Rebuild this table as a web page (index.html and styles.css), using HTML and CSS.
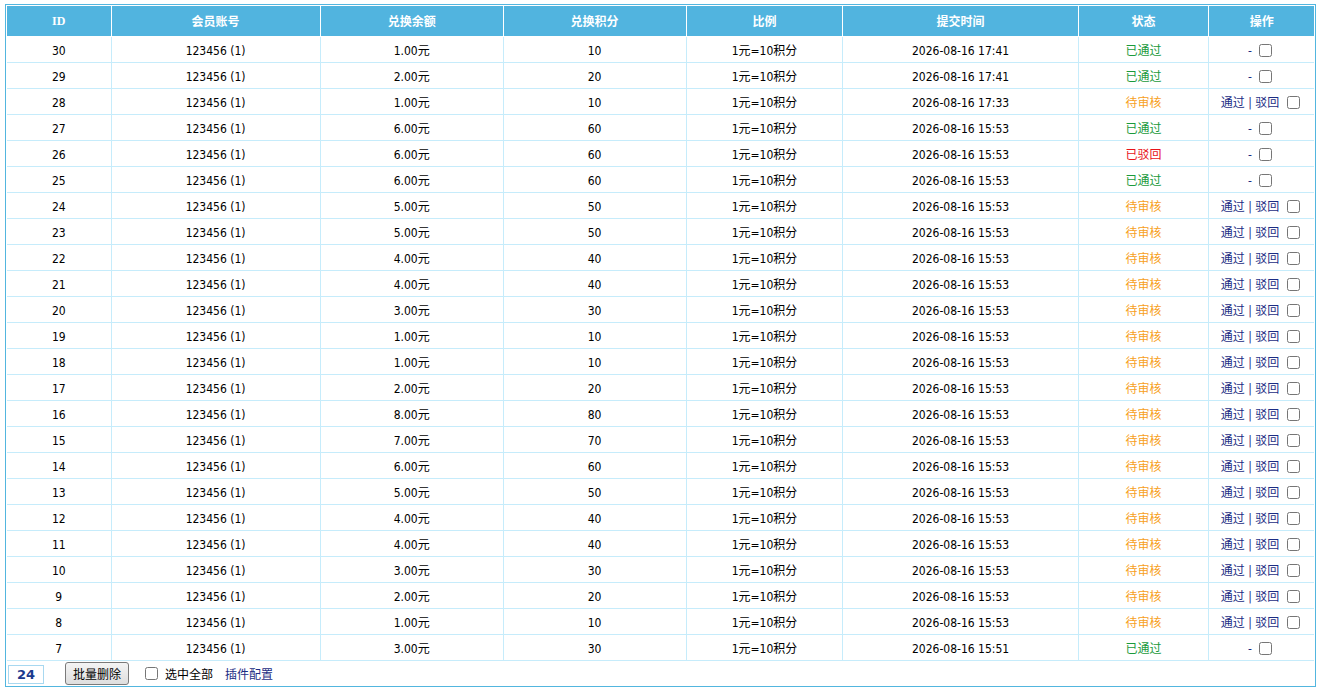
FILE: index.html
```html
<!DOCTYPE html>
<html lang="zh-CN">
<head>
<meta charset="utf-8">
<title>积分兑换记录</title>
<link rel="stylesheet" href="styles.css">
</head>
<body>
<div class="panel">
<table class="grid">
<colgroup>
<col class="c-id"><col class="c-user"><col class="c-money"><col class="c-point"><col class="c-rate"><col class="c-time"><col class="c-state"><col class="c-op">
</colgroup>
<thead>
<tr><th>ID</th><th>会员账号</th><th>兑换余额</th><th>兑换积分</th><th>比例</th><th>提交时间</th><th>状态</th><th>操作</th></tr>
</thead>
<tbody>
<tr><td>30</td><td>123456 (1)</td><td>1.00元</td><td>10</td><td>1元=10积分</td><td>2026-08-16 17:41</td><td class="ok">已通过</td><td class="op">- <input type="checkbox" class="chk"></td></tr>
<tr><td>29</td><td>123456 (1)</td><td>2.00元</td><td>20</td><td>1元=10积分</td><td>2026-08-16 17:41</td><td class="ok">已通过</td><td class="op">- <input type="checkbox" class="chk"></td></tr>
<tr><td>28</td><td>123456 (1)</td><td>1.00元</td><td>10</td><td>1元=10积分</td><td>2026-08-16 17:33</td><td class="wait">待审核</td><td class="op"><a href="#">通过</a> | <a href="#">驳回</a> <input type="checkbox" class="chk"></td></tr>
<tr><td>27</td><td>123456 (1)</td><td>6.00元</td><td>60</td><td>1元=10积分</td><td>2026-08-16 15:53</td><td class="ok">已通过</td><td class="op">- <input type="checkbox" class="chk"></td></tr>
<tr><td>26</td><td>123456 (1)</td><td>6.00元</td><td>60</td><td>1元=10积分</td><td>2026-08-16 15:53</td><td class="no">已驳回</td><td class="op">- <input type="checkbox" class="chk"></td></tr>
<tr><td>25</td><td>123456 (1)</td><td>6.00元</td><td>60</td><td>1元=10积分</td><td>2026-08-16 15:53</td><td class="ok">已通过</td><td class="op">- <input type="checkbox" class="chk"></td></tr>
<tr><td>24</td><td>123456 (1)</td><td>5.00元</td><td>50</td><td>1元=10积分</td><td>2026-08-16 15:53</td><td class="wait">待审核</td><td class="op"><a href="#">通过</a> | <a href="#">驳回</a> <input type="checkbox" class="chk"></td></tr>
<tr><td>23</td><td>123456 (1)</td><td>5.00元</td><td>50</td><td>1元=10积分</td><td>2026-08-16 15:53</td><td class="wait">待审核</td><td class="op"><a href="#">通过</a> | <a href="#">驳回</a> <input type="checkbox" class="chk"></td></tr>
<tr><td>22</td><td>123456 (1)</td><td>4.00元</td><td>40</td><td>1元=10积分</td><td>2026-08-16 15:53</td><td class="wait">待审核</td><td class="op"><a href="#">通过</a> | <a href="#">驳回</a> <input type="checkbox" class="chk"></td></tr>
<tr><td>21</td><td>123456 (1)</td><td>4.00元</td><td>40</td><td>1元=10积分</td><td>2026-08-16 15:53</td><td class="wait">待审核</td><td class="op"><a href="#">通过</a> | <a href="#">驳回</a> <input type="checkbox" class="chk"></td></tr>
<tr><td>20</td><td>123456 (1)</td><td>3.00元</td><td>30</td><td>1元=10积分</td><td>2026-08-16 15:53</td><td class="wait">待审核</td><td class="op"><a href="#">通过</a> | <a href="#">驳回</a> <input type="checkbox" class="chk"></td></tr>
<tr><td>19</td><td>123456 (1)</td><td>1.00元</td><td>10</td><td>1元=10积分</td><td>2026-08-16 15:53</td><td class="wait">待审核</td><td class="op"><a href="#">通过</a> | <a href="#">驳回</a> <input type="checkbox" class="chk"></td></tr>
<tr><td>18</td><td>123456 (1)</td><td>1.00元</td><td>10</td><td>1元=10积分</td><td>2026-08-16 15:53</td><td class="wait">待审核</td><td class="op"><a href="#">通过</a> | <a href="#">驳回</a> <input type="checkbox" class="chk"></td></tr>
<tr><td>17</td><td>123456 (1)</td><td>2.00元</td><td>20</td><td>1元=10积分</td><td>2026-08-16 15:53</td><td class="wait">待审核</td><td class="op"><a href="#">通过</a> | <a href="#">驳回</a> <input type="checkbox" class="chk"></td></tr>
<tr><td>16</td><td>123456 (1)</td><td>8.00元</td><td>80</td><td>1元=10积分</td><td>2026-08-16 15:53</td><td class="wait">待审核</td><td class="op"><a href="#">通过</a> | <a href="#">驳回</a> <input type="checkbox" class="chk"></td></tr>
<tr><td>15</td><td>123456 (1)</td><td>7.00元</td><td>70</td><td>1元=10积分</td><td>2026-08-16 15:53</td><td class="wait">待审核</td><td class="op"><a href="#">通过</a> | <a href="#">驳回</a> <input type="checkbox" class="chk"></td></tr>
<tr><td>14</td><td>123456 (1)</td><td>6.00元</td><td>60</td><td>1元=10积分</td><td>2026-08-16 15:53</td><td class="wait">待审核</td><td class="op"><a href="#">通过</a> | <a href="#">驳回</a> <input type="checkbox" class="chk"></td></tr>
<tr><td>13</td><td>123456 (1)</td><td>5.00元</td><td>50</td><td>1元=10积分</td><td>2026-08-16 15:53</td><td class="wait">待审核</td><td class="op"><a href="#">通过</a> | <a href="#">驳回</a> <input type="checkbox" class="chk"></td></tr>
<tr><td>12</td><td>123456 (1)</td><td>4.00元</td><td>40</td><td>1元=10积分</td><td>2026-08-16 15:53</td><td class="wait">待审核</td><td class="op"><a href="#">通过</a> | <a href="#">驳回</a> <input type="checkbox" class="chk"></td></tr>
<tr><td>11</td><td>123456 (1)</td><td>4.00元</td><td>40</td><td>1元=10积分</td><td>2026-08-16 15:53</td><td class="wait">待审核</td><td class="op"><a href="#">通过</a> | <a href="#">驳回</a> <input type="checkbox" class="chk"></td></tr>
<tr><td>10</td><td>123456 (1)</td><td>3.00元</td><td>30</td><td>1元=10积分</td><td>2026-08-16 15:53</td><td class="wait">待审核</td><td class="op"><a href="#">通过</a> | <a href="#">驳回</a> <input type="checkbox" class="chk"></td></tr>
<tr><td>9</td><td>123456 (1)</td><td>2.00元</td><td>20</td><td>1元=10积分</td><td>2026-08-16 15:53</td><td class="wait">待审核</td><td class="op"><a href="#">通过</a> | <a href="#">驳回</a> <input type="checkbox" class="chk"></td></tr>
<tr><td>8</td><td>123456 (1)</td><td>1.00元</td><td>10</td><td>1元=10积分</td><td>2026-08-16 15:53</td><td class="wait">待审核</td><td class="op"><a href="#">通过</a> | <a href="#">驳回</a> <input type="checkbox" class="chk"></td></tr>
<tr><td>7</td><td>123456 (1)</td><td>3.00元</td><td>30</td><td>1元=10积分</td><td>2026-08-16 15:51</td><td class="ok">已通过</td><td class="op">- <input type="checkbox" class="chk"></td></tr>
</tbody>
</table>
<div class="foot">
<span class="count">24</span>
<button type="button" class="btn">批量删除</button>
<label class="all"><input type="checkbox" class="chk">选中全部</label>
<a href="#" class="cfg">插件配置</a>
</div>
</div>
</body>
</html>
```

FILE: styles.css
```css
html, body { background: #fff; }
body {
  margin: 4px 0 0 5px;
  font-family: "DejaVu Sans Condensed", "DejaVu Sans", "Noto Sans CJK SC", sans-serif;
  font-size: 12px;
  color: #000;
}
.panel {
  width: 1311px;
  box-sizing: border-box;
  border: 1px solid #52b6df;
  padding: 1px;
}
.grid {
  width: 100%;
  table-layout: fixed;
  border-collapse: separate;
  border-spacing: 0;
}
.c-id { width: 8%; }
.c-user { width: 16%; }
.c-money { width: 14%; }
.c-point { width: 14%; }
.c-rate { width: 12%; }
.c-time { width: 18%; }
.c-state { width: 10%; }
.c-op { width: 8%; }
.grid th {
  height: 30px;
  padding: 0;
  background: #51b4df;
  color: #fff;
  font-family: "Liberation Serif", "Noto Sans CJK SC", serif;
  font-weight: bold;
  font-size: 12px;
  text-align: center;
  vertical-align: middle;
  border-right: 1px solid #fff;
  border-bottom: 1px solid #fff;
}
.grid th:last-child { border-right: 0; }
.grid td {
  height: 23px;
  padding: 2px 0 0;
  line-height: 12px;
  text-align: center;
  vertical-align: middle;
  white-space: nowrap;
  border-right: 1px solid #c6ecfb;
  border-bottom: 1px solid #c6ecfb;
}
.grid td:last-child { border-right: 0; }
.grid .ok { color: #1a9a3c; }
.grid .wait { color: #f7a01b; }
.grid .no { color: #e8131a; }
.grid .op { color: #1c2d84; }
.grid .op a { color: #1c2d84; text-decoration: none; }
.chk {
  width: 13px;
  height: 13px;
  margin: 0 3px 0 4px;
  vertical-align: -2px;
}
.foot {
  height: 24px;
  display: flex;
  align-items: center;
}
.count {
  box-sizing: border-box;
  width: 36px;
  height: 19px;
  margin-left: 1px;
  margin-top: 3px;
  border: 1px solid #a8d8f0;
  color: #1b3a8e;
  font-family: "DejaVu Sans", sans-serif;
  font-weight: bold;
  font-size: 13px;
  line-height: 17px;
  text-align: center;
}
.btn {
  box-sizing: border-box;
  height: 23px;
  width: 64px;
  margin-left: 21px;
  padding: 0;
  border: 1px solid #7a7a7a;
  border-radius: 3px;
  background: linear-gradient(#f4f4f4, #dedede);
  font-family: "Noto Sans CJK SC", sans-serif;
  font-size: 12px;
  color: #000;
}
.all {
  display: flex;
  align-items: center;
  margin-left: 12px;
  font-family: "Noto Sans CJK SC", sans-serif;
  font-size: 12px;
}
.all .chk { margin: 0 7px 0 4px; vertical-align: baseline; }
.cfg {
  margin-left: 12px;
  color: #1c2d84;
  text-decoration: none;
  font-family: "Noto Sans CJK SC", sans-serif;
  font-size: 12px;
}
```
